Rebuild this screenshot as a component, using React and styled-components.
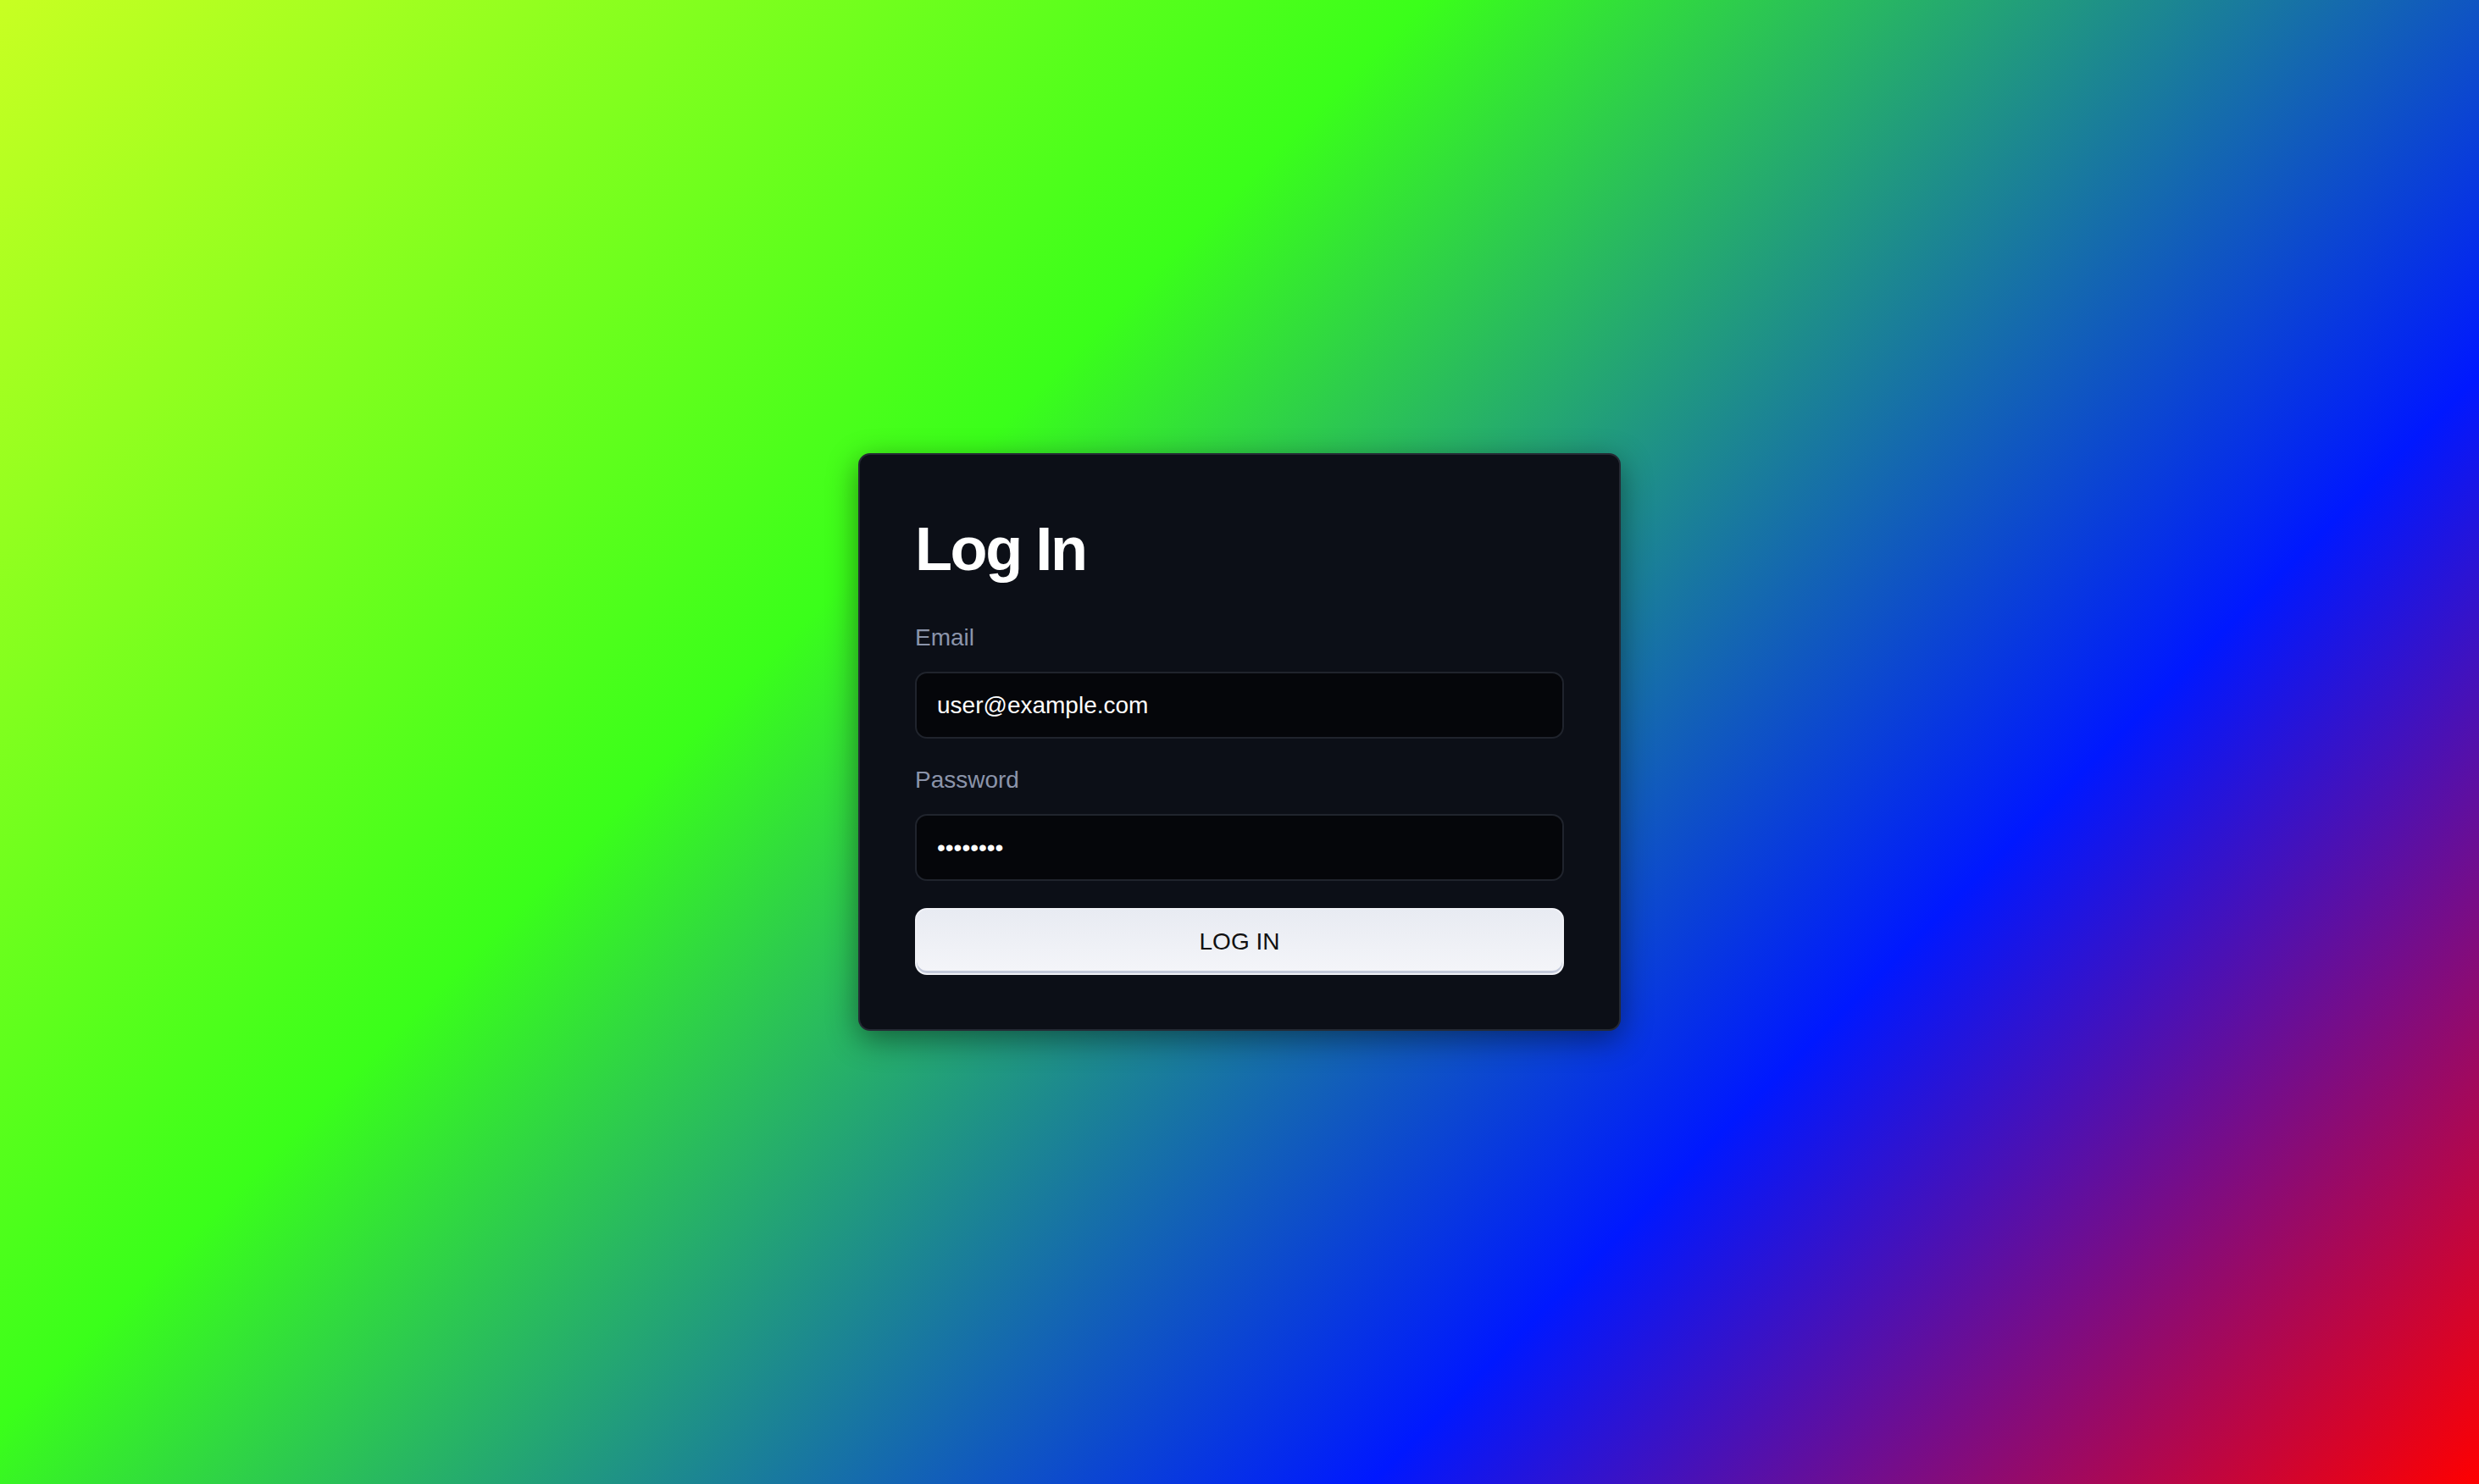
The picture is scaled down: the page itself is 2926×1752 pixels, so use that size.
import React from "react";
import styled, { createGlobalStyle } from "styled-components";

const GlobalStyle = createGlobalStyle`
  html, body {
    margin: 0;
    padding: 0;
    height: 100%;
  }
  body {
    font-family: "Liberation Sans", Arial, Helvetica, sans-serif;
  }
  #root {
    height: 100%;
  }
  * {
    box-sizing: border-box;
  }
`;

const Page = styled.main`
  min-height: 100vh;
  display: flex;
  align-items: center;
  justify-content: center;
  background: linear-gradient(
    135deg,
    #c8ff22 0%,
    #3aff1a 36%,
    #0018ff 72%,
    #ff0000 100%
  );
`;

const Card = styled.section`
  width: 900px;
  background: #0c0f17;
  border: 2px solid #252a34;
  border-radius: 14px;
  padding: 64px 65px;
  box-shadow: 0 10px 36px rgba(0, 0, 0, 0.45);
  display: flex;
  flex-direction: column;
`;

const Title = styled.h1`
  margin: 0 0 41px;
  font-size: 72px;
  line-height: 94px;
  font-weight: 700;
  letter-spacing: -2.4px;
  color: #ffffff;
`;

const Form = styled.form`
  display: flex;
  flex-direction: column;
`;

const Field = styled.div`
  display: flex;
  flex-direction: column;
  gap: 23px;
  margin-bottom: 32px;
`;

const Label = styled.label`
  font-size: 28px;
  line-height: 34px;
  color: #8b94aa;
`;

const Input = styled.input`
  height: 79px;
  width: 100%;
  background: #05060a;
  border: 2px solid #20242d;
  border-radius: 14px;
  padding: 0 24px;
  font-family: "Liberation Sans", Arial, Helvetica, sans-serif;
  font-size: 28px;
  color: #ffffff;
  outline: none;
`;

const Button = styled.button`
  height: 79px;
  width: 100%;
  border: 2px solid #f1f2f7;
  border-radius: 14px;
  background: linear-gradient(180deg, #e8ebf2 0%, #f4f5f9 100%);
  box-shadow: inset 0 -3px 0 #c3c9da;
  font-family: "Liberation Sans", Arial, Helvetica, sans-serif;
  font-size: 28px;
  color: #111111;
  cursor: pointer;
`;

export default function App() {
  return (
    <>
      <GlobalStyle />
      <Page>
        <Card>
          <Title>Log In</Title>
          <Form onSubmit={(e) => e.preventDefault()}>
            <Field>
              <Label htmlFor="email">Email</Label>
              <Input id="email" type="email" defaultValue="user@example.com" />
            </Field>
            <Field>
              <Label htmlFor="password">Password</Label>
              <Input id="password" type="password" defaultValue="password" />
            </Field>
            <Button type="submit">LOG IN</Button>
          </Form>
        </Card>
      </Page>
    </>
  );
}
